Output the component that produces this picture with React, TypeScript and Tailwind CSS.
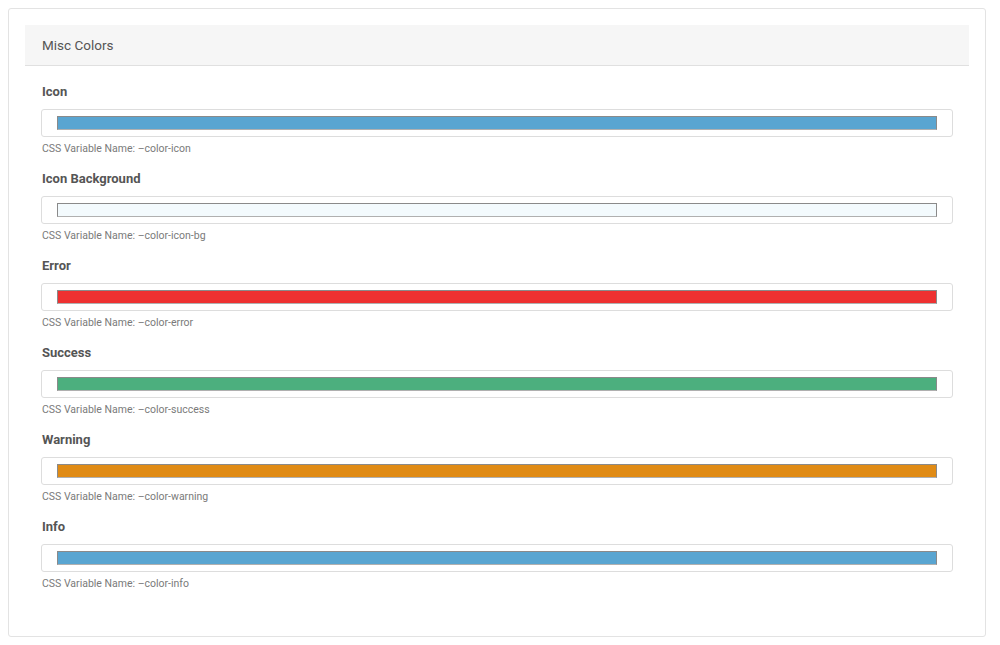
import React from "react";

const items = [
  { label: "Icon", name: "--color-icon", color: "#59a5d1" },
  { label: "Icon Background", name: "--color-icon-bg", color: "#f3fafd" },
  { label: "Error", name: "--color-error", color: "#ee3131" },
  { label: "Success", name: "--color-success", color: "#4caf7e" },
  { label: "Warning", name: "--color-warning", color: "#e08b15" },
  { label: "Info", name: "--color-info", color: "#59a5d1" },
];

export default function App() {
  return (
    <div className="w-[1000px] h-[645px] bg-white p-2 font-['Roboto',sans-serif]">
      <div className="h-[629px] w-[978px] border border-[#e3e3e3] rounded-[3px] p-4">
        <div className="h-[41px] bg-[#f6f6f6] border-b border-[#e0e0e0] pl-[17px] pr-4 flex items-center">
          <span className="text-[13.5px] text-[#555]">Misc Colors</span>
        </div>
        <div className="px-4 pt-4">
          {items.map((it) => (
            <div key={it.name} className="mb-[13px]">
              <div className="h-5 leading-5 text-[13px] font-bold text-[#555] mb-[7px] pl-px">{it.label}</div>
              <div className="h-[28px] border border-[#ddd] rounded-[3px] px-[15px] py-[6px] bg-white">
                <div
                  className="h-[14px] border border-[#8a8a8a] border-b-[#b0b0b0]"
                  style={{ backgroundColor: it.color }}
                />
              </div>
              <div className="mt-1 h-[15px] leading-[15px] text-[10.5px] text-[#7a7a7a] pl-px">
                CSS Variable Name: –{it.name.slice(2)}
              </div>
            </div>
          ))}
        </div>
      </div>
    </div>
  );
}
